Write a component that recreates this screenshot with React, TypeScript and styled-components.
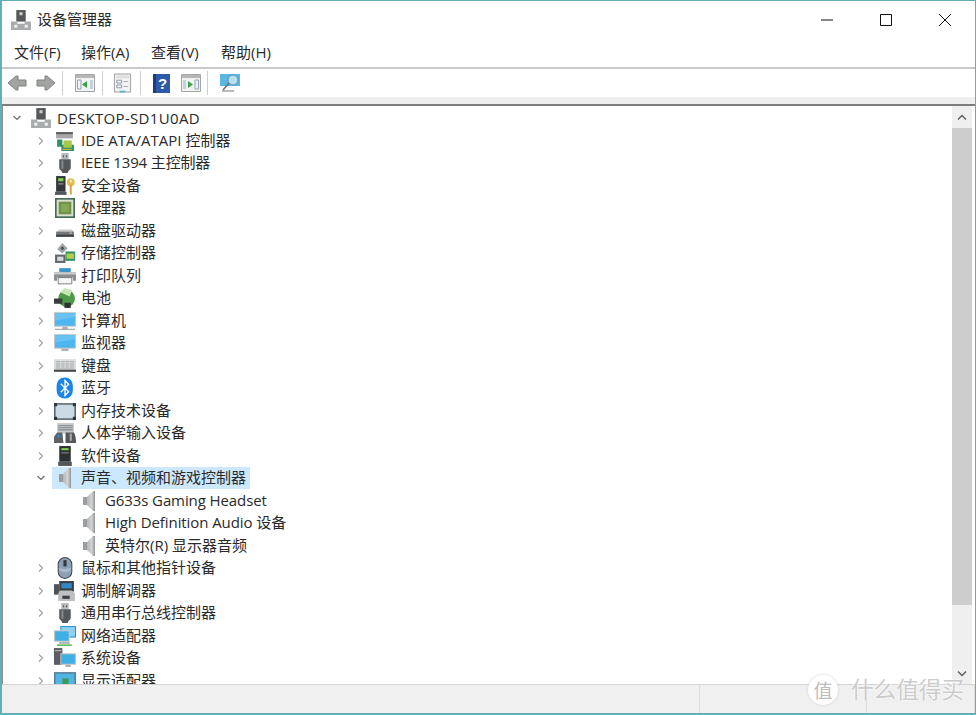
import React from 'react';
import styled, { createGlobalStyle } from 'styled-components';

const Global = createGlobalStyle`
  html, body { margin: 0; padding: 0; background: #fff; }
  body { font-family: "Open Sans", "Noto Sans CJK SC", sans-serif; color: #2a2a2a; }
`;

const Window = styled.div`
  position: relative;
  width: 976px;
  height: 715px;
  box-sizing: border-box;
  display: flex;
  flex-direction: column;
  overflow: hidden;
  background: #fff;
  border: 1px solid #63aeb8;
  border-width: 1px 1px 2px 2px;
`;

const TitleBar = styled.div`
  height: 37px;
  display: flex;
  align-items: center;
  padding: 0 1px 0 8px;
  flex: none;
`;

const Title = styled.span`
  font-size: 15px;
  margin-left: 5px;
  padding-bottom: 2px;
  flex: 1;
`;

const WinButton = styled.div`
  width: 59px;
  height: 37px;
  display: flex;
  align-items: center;
  justify-content: center;
`;

const MenuBar = styled.div`
  height: 27px;
  padding: 0 0 2px 12px;
  display: flex;
  align-items: center;
  font-size: 15px;
  flex: none;
  border-bottom: 2px solid #c9c9c9;
`;

const MenuItem = styled.span<{ $w: number }>`
  width: ${p => p.$w}px;
  white-space: nowrap;
`;

const ToolBar = styled.div`
  height: 28px;
  display: flex;
  align-items: center;
  flex: none;
`;

const ToolButton = styled.div<{ $ml: number }>`
  margin-left: ${p => p.$ml}px;
  height: 26px;
  display: flex;
  align-items: center;
`;

const ToolSep = styled.div<{ $ml: number }>`
  width: 1px;
  height: 24px;
  background: #cfcfcf;
  margin-left: ${p => p.$ml}px;
`;

const Shelf = styled.div`
  height: 7px;
  flex: none;
  background: #efefef;
  border-bottom: 2px solid #7d7d7d;
`;

const Body = styled.div`
  flex: 1;
  min-height: 0;
  display: flex;
  border-left: 1px solid #8a8f90;
`;

const Tree = styled.div`
  flex: 1;
  min-width: 0;
  overflow: hidden;
  padding: 0.75px 0 0 6px;
`;

const Row = styled.div<{ $level: number }>`
  height: 22.5px;
  display: flex;
  align-items: center;
  padding-left: ${p => p.$level * 24}px;
`;

const Chevron = styled.div`
  width: 16px;
  margin-right: 3px;
  display: flex;
  justify-content: center;
  flex: none;
`;

const Label = styled.div<{ $selected?: boolean }>`
  display: flex;
  align-items: center;
  height: 22px;
  padding-right: 4px;
  background: ${p => (p.$selected ? '#cce8ff' : 'transparent')};
`;

const IconSlot = styled.div`
  width: 26px;
  height: 22px;
  display: flex;
  align-items: center;
  justify-content: center;
  margin-right: 3px;
  flex: none;
`;

const RowText = styled.span<{ $track?: number; $root?: boolean }>`
  font-size: 15px;
  line-height: 20px;
  padding-bottom: ${p => (p.$root ? 0 : 2)}px;
  white-space: nowrap;
  letter-spacing: ${p => p.$track ?? 0}px;
`;

const Scrollbar = styled.div`
  width: 20px;
  margin-right: 3px;
  flex: none;
  display: flex;
  flex-direction: column;
  background: #efefef;
`;

const ScrollArrow = styled.div`
  height: 22px;
  flex: none;
  display: flex;
  align-items: center;
  justify-content: center;
`;

const ScrollThumb = styled.div`
  height: 477px;
  flex: none;
  background: #cdcdcd;
`;

const ScrollGap = styled.div`
  flex: 1;
`;

const StatusBar = styled.div`
  height: 28px;
  flex: none;
  display: flex;
  background: #f0f0f0;
  border-top: 1px solid #d4d4d4;
`;

const StatusCell = styled.div<{ $w?: number }>`
  ${p => (p.$w ? `width: ${p.$w}px; flex: none;` : 'flex: 1;')}
  border-right: 1px solid #dcdcdc;
`;

const Watermark = styled.div`
  position: absolute;
  right: 11px;
  bottom: 8px;
  display: flex;
  align-items: center;
  gap: 13px;
  color: #cbcbcb;
  text-shadow: 0 0 2px #fff, 0 0 2px #fff;
`;

const MarkBadge = styled.div`
  width: 30px;
  height: 30px;
  border-radius: 50%;
  background: #fff;
  box-shadow: 0 0 3px #cfcfcf;
  display: flex;
  align-items: center;
  justify-content: center;
  font-size: 19px;
  color: #bdbdbd;
`;

const MarkText = styled.span`
  font-size: 22.6px;
  line-height: 28px;
  white-space: nowrap;
`;

type IconName =
  | 'pc' | 'ide' | 'usb' | 'sec' | 'cpu' | 'disk' | 'storage' | 'printer' | 'battery'
  | 'computer' | 'monitor' | 'keyboard' | 'bluetooth' | 'memory' | 'hid' | 'software'
  | 'mouse' | 'modem' | 'network' | 'system' | 'display';

const Icon = ({ name }: { name: IconName }) => {
  const body = () => {
    switch (name) {
      case 'pc':
        return <>
          <path d="M6 1h9v11h-9z" fill="#55585a" />
          <path d="M9 3h3v3h-3z" fill="#c9cccd" />
          <path d="M1 12h6v2h7v-2h6v8h-19z" fill="#a9acae" />
          <path d="M4 15h3v3h-3zM14 15h3v3h-3z" fill="#eceded" />
        </>;
      case 'ide':
        return <>
          <path d="M2 2h16v6h-16z" fill="#a5a7a9" />
          <path d="M2 2h16v2h-16z" fill="#5d6063" />
          <path d="M3 9h5v5h11v6h-12v-4h-4z" fill="#2e8f62" />
          <path d="M9 10h8v7h-8z" fill="#a8c84a" />
          <path d="M8 18h9v1h-9z" fill="#d7b64a" />
        </>;
      case 'usb':
        return <>
          <path d="M7 1h7v6h-7z" fill="#b7babc" />
          <path d="M8.5 3h1v2h-1zM11.5 3h1v2h-1z" fill="#55585a" />
          <path d="M5 7h11v8q0 2-2 3l-1 2h-5l-1-2q-2-1-2-3z" fill="#55585a" />
          <path d="M7 8h2v8h-2z" fill="#85888a" />
        </>;
      case 'sec':
        return <>
          <path d="M2 1h9v15h-9z" fill="#33363a" />
          <path d="M4 3h5v3h-5z" fill="#7fd04a" />
          <path d="M4 8h5v1h-5z" fill="#a6a8aa" />
          <path d="M1 16h11v3h-11z" fill="#55585a" />
          <circle cx="16" cy="7" r="3.8" fill="#e9bd52" />
          <path d="M15 9h2v10l-2-1z" fill="#d9a93c" />
          <circle cx="16" cy="6" r="1" fill="#fff" />
        </>;
      case 'cpu':
        return <>
          <path d="M1 1h19v19h-19z" fill="#3a6550" />
          <path d="M2.5 2.5h16v16h-16z" fill="#d9decf" />
          <path d="M4.5 4.5h12v12h-12z" fill="#6f9146" />
          <path d="M6.5 6.5h8v8h-8z" fill="#86a653" />
        </>;
      case 'disk':
        return <>
          <path d="M3 11l2-2h12l2 2z" fill="#c9cbcd" />
          <path d="M2 11h17v5h-17z" fill="#75787a" />
          <path d="M2 14h17v2h-17z" fill="#3f4245" />
          <path d="M15 12h2v1h-2z" fill="#d5d7d8" />
        </>;
      case 'storage':
        return <>
          <path d="M3 7l5-6 5 5-5 5z" fill="#a5a8aa" />
          <path d="M6 6l2-2 2 2-2 2z" fill="#505356" />
          <path d="M1 12h10v8h-10z" fill="#63676a" />
          <path d="M3 14h6v4h-6z" fill="#d7d9da" />
          <path d="M11 9h9v9h-9z" fill="#2f9166" />
          <path d="M12 11h7v5h-7z" fill="#b4cf4d" />
        </>;
      case 'printer':
        return <>
          <path d="M5 3h11v4h-11z" fill="#3d94c9" />
          <path d="M0 7h21v8h-3v-3h-15v3h-3z" fill="#8d9092" />
          <path d="M0 7h21v2h-21z" fill="#cfd1d2" />
          <path d="M4 12h13v6h-13z" fill="#f6f6f6" stroke="#55585a" strokeWidth=".7" />
        </>;
      case 'battery':
        return <>
          <circle cx="12" cy="11" r="8" fill="#4d9b49" />
          <path d="M6 5l4-4 7 2-2 6z" fill="#c8e6b3" />
          <path d="M0 11h8v5h-8z" fill="#3a3d40" />
          <path d="M10 15h6v5h-6z" fill="#2e3134" />
        </>;
      case 'computer':
      case 'monitor':
        return <>
          <path d="M0 2h21v14h-21z" fill="#c4c6c8" />
          <path d="M1 3h19v12h-19z" fill="#4db6ee" />
          <path d="M1 3h19v4l-19 3z" fill="#68c3f2" />
          {name === 'computer'
            ? <path d="M8 16h5v2h-5zM1 18h19v1h-19z" fill="#a9acae" />
            : <path d="M7 16h7v2h-7z" fill="#a9acae" />}
        </>;
      case 'keyboard':
        return <>
          <path d="M0 4h21v12h-21z" fill="#dadcdd" />
          <path d="M0 14h21v2h-21z" fill="#43464a" />
          <path d="M2 6h17v1h-17zM2 8h17v1h-17zM2 10h17v1h-17zM2 12h17v1h-17z" fill="#a4a7a9" />
          <path d="M6 5.5h1v7h-1zM10 5.5h1v7h-1zM14 5.5h1v7h-1z" fill="#dadcdd" />
        </>;
      case 'bluetooth':
        return <>
          <rect x="2.5" y="0.5" width="15.5" height="20" rx="7.5" fill="#1a87e8" />
          <path d="M6.5 6.5l7.5 7.5-3.5 3.5v-14l3.5 3.5-7.5 7.5" fill="none" stroke="#fff" strokeWidth="1.3" />
        </>;
      case 'memory':
        return <>
          <path d="M0 3h21v16h-21z" fill="#5a6670" />
          <path d="M1.5 4.5h18v13h-18z" fill="#cbdae5" />
          <path d="M0 3h3v3h-3zM18 3h3v3h-3zM0 16h3v3h-3zM18 16h3v3h-3z" fill="#2e3438" />
        </>;
      case 'hid':
        return <>
          <path d="M3 1h16v10h-16z" fill="#c6c8ca" />
          <path d="M4 3h14v1h-14zM4 5h14v1h-14zM4 7h14v1h-14z" fill="#85888a" />
          <path d="M0 14l3-4h5l1 10h-9z" fill="#5e6265" />
          <path d="M3 12h3v3h-3z" fill="#2f80c4" />
          <path d="M11 10h8q2 3 2 10h-10z" fill="#54585b" />
          <path d="M15 11h2v7h-2z" fill="#a8abad" />
        </>;
      case 'software':
        return <>
          <path d="M5 1h11v15h-11z" fill="#2e3134" />
          <path d="M7 3h7v2h-7z" fill="#7fd04a" />
          <path d="M7 7h7v1h-7z" fill="#8a8d8f" />
          <path d="M4 16h13v4h-13z" fill="#55585a" />
        </>;
      case 'mouse':
        return <>
          <rect x="4" y="0.5" width="13" height="20" rx="6.5" fill="#8ba0b6" stroke="#43474c" />
          <path d="M9 3h3v6h-3z" fill="#33373b" />
          <path d="M5 10q5 3 11 0v3q-5 3-11 0z" fill="#a9bacb" />
        </>;
      case 'modem':
        return <>
          <path d="M0 4h5v10h-5z" fill="#4f5356" />
          <path d="M5 1h14v10h-14z" fill="#3a3e42" />
          <path d="M7 3h10v5h-10z" fill="#3388c6" />
          <path d="M4 13l2-3h11l3 3v7h-16z" fill="#bdbfc1" />
          <path d="M8 15h7v3h-7z" fill="#3b3e42" />
        </>;
      case 'network':
        return <>
          <path d="M6 1h15v11h-15z" fill="#2f8fc4" />
          <path d="M7 2h13v9h-13z" fill="#8ed2f2" />
          <path d="M0 5h15v11h-15z" fill="#c4c6c8" />
          <path d="M1 6h13v9h-13z" fill="#3fb0e6" />
          <path d="M5 16h10v2h-10z" fill="#b1b3b5" />
          <path d="M3 18.5h14v1.5h-14z" fill="#50bb50" />
        </>;
      case 'system':
        return <>
          <path d="M0 1h8v16h-8z" fill="#5b5f62" />
          <path d="M1 3h6v1h-6z" fill="#b9bbbd" />
          <path d="M6 6h15v11h-15z" fill="#bfc1c3" />
          <path d="M7 7h13v9h-13z" fill="#3fb0e6" />
          <path d="M11 17h5v2h-5z" fill="#a9acae" />
        </>;
      case 'display':
        return <>
          <path d="M0 2h21v16h-21z" fill="#5a7f96" />
          <path d="M1.5 3.5h18v13h-18z" fill="#4fb5e4" />
          <path d="M8 8h6v6h-6z" fill="#3b9a5c" />
        </>;
    }
  };
  return <svg width="22" height="22" viewBox="0 0 21 21">{body()}</svg>;
};

const Speaker = () => (
  <svg width="14" height="22" viewBox="0 0 14 22">
    <defs>
      <linearGradient id="cone" x1="0" x2="1" y1="0" y2="0">
        <stop offset="0" stopColor="#b4b6b8" />
        <stop offset="0.6" stopColor="#d2d4d5" />
        <stop offset="1" stopColor="#8f9294" />
      </linearGradient>
    </defs>
    <path d="M1 7h4v8h-4z" fill="#9a9d9f" />
    <path d="M5 7l6-6h2v20h-2l-6-6z" fill="url(#cone)" />
  </svg>
);

const ChevronRight = () => (
  <svg width="8" height="10" viewBox="0 0 8 10"><path d="M2 1.5l3.5 3.5-3.5 3.5" fill="none" stroke="#a2a2a2" strokeWidth="1.2" /></svg>
);

const ChevronDown = () => (
  <svg width="10" height="8" viewBox="0 0 10 8"><path d="M1.5 2l3.5 3.5 3.5-3.5" fill="none" stroke="#6d6d6d" strokeWidth="1.2" /></svg>
);

const BackArrow = ({ flip }: { flip?: boolean }) => (
  <svg width="20" height="18" viewBox="0 0 20 18" style={flip ? { transform: 'scaleX(-1)' } : undefined}>
    <path d="M1 9l8-7h2v4h8v6h-8v4h-2z" fill="#a2a4a2" stroke="#7f817f" strokeLinejoin="round" />
  </svg>
);

const PaneIcon = ({ right }: { right?: boolean }) => (
  <svg width="20" height="18" viewBox="0 0 20 18">
    <path d="M0.5 0.5h19v17h-19z" fill="#f2f2f2" stroke="#a5a5a5" />
    <path d="M1 1h18v3h-18z" fill="#b5b7b9" />
    {right
      ? <path d="M7 7l5 3.5-5 3.5z" fill="#3ca34a" />
      : <path d="M12 7l-5 3.5 5 3.5z" fill="#3ca34a" />}
    <path d={right ? 'M14 6h3.5v9h-3.5z' : 'M2.5 6h3.5v9h-3.5z'} fill="none" stroke="#8aa4bd" />
    <path d={right ? 'M2 6h3v9h-3z' : 'M15 6h3v9h-3z'} fill="#c4d2df" />
  </svg>
);

const DocIcon = () => (
  <svg width="19" height="21" viewBox="0 0 20 21">
    <path d="M1.5 0.5h17v19h-17z" fill="#f3f3f3" stroke="#9c9c9c" />
    <path d="M3 2h14v3h-14z" fill="#dedede" />
    <path d="M4 7h5v3h-5zM4 12h5v3h-5z" fill="none" stroke="#8d99a5" />
    <path d="M11 8h5v1h-5zM11 13h5v1h-5z" fill="#8d99a5" />
    <path d="M7 18h6v2h-6z" fill="#65b4d8" />
  </svg>
);

const HelpIcon = () => (
  <svg width="17" height="21" viewBox="0 0 17 21">
    <path d="M0 1h17v19h-17z" fill="#2c5aa8" />
    <path d="M0 1h3v19h-3z" fill="#1c3c7c" />
    <text x="9.5" y="16" fontSize="15" fontWeight="700" fill="#fff" textAnchor="middle" fontFamily="Liberation Sans">?</text>
  </svg>
);

const SearchIcon = () => (
  <svg width="22" height="20" viewBox="0 0 22 20">
    <path d="M1 1h20v12h-20z" fill="#58b7e3" />
    <circle cx="14" cy="7" r="5" fill="#b7dff2" stroke="#5e93ae" />
    <path d="M10 10l-6 7" stroke="#6d7073" strokeWidth="1.6" />
    <path d="M3 18h12" stroke="#9a9c9e" strokeWidth="1.4" />
  </svg>
);

const rows: { level: number; icon: IconName | 'speaker'; text: string; open?: boolean; leaf?: boolean; selected?: boolean; track?: number }[] = [
  { level: 0, icon: 'pc', text: 'DESKTOP-SD1U0AD', open: true, track: 0.33 },
  { level: 1, icon: 'ide', text: 'IDE ATA/ATAPI 控制器' },
  { level: 1, icon: 'usb', text: 'IEEE 1394 主控制器', track: -0.15 },
  { level: 1, icon: 'sec', text: '安全设备' },
  { level: 1, icon: 'cpu', text: '处理器' },
  { level: 1, icon: 'disk', text: '磁盘驱动器' },
  { level: 1, icon: 'storage', text: '存储控制器' },
  { level: 1, icon: 'printer', text: '打印队列' },
  { level: 1, icon: 'battery', text: '电池' },
  { level: 1, icon: 'computer', text: '计算机' },
  { level: 1, icon: 'monitor', text: '监视器' },
  { level: 1, icon: 'keyboard', text: '键盘' },
  { level: 1, icon: 'bluetooth', text: '蓝牙' },
  { level: 1, icon: 'memory', text: '内存技术设备' },
  { level: 1, icon: 'hid', text: '人体学输入设备' },
  { level: 1, icon: 'software', text: '软件设备' },
  { level: 1, icon: 'speaker', text: '声音、视频和游戏控制器', open: true, selected: true },
  { level: 2, icon: 'speaker', text: 'G633s Gaming Headset', leaf: true, track: -0.1 },
  { level: 2, icon: 'speaker', text: 'High Definition Audio 设备', leaf: true, track: -0.08 },
  { level: 2, icon: 'speaker', text: '英特尔(R) 显示器音频', leaf: true },
  { level: 1, icon: 'mouse', text: '鼠标和其他指针设备' },
  { level: 1, icon: 'modem', text: '调制解调器' },
  { level: 1, icon: 'usb', text: '通用串行总线控制器' },
  { level: 1, icon: 'network', text: '网络适配器' },
  { level: 1, icon: 'system', text: '系统设备' },
  { level: 1, icon: 'display', text: '显示适配器' },
];

const App = () => (
  <>
    <Global />
    <Window>
      <TitleBar>
        <Icon name="pc" />
        <Title>设备管理器</Title>
        <WinButton>
          <svg width="12" height="2" viewBox="0 0 12 2"><path d="M0 1h12" stroke="#111" /></svg>
        </WinButton>
        <WinButton>
          <svg width="12" height="12" viewBox="0 0 12 12"><path d="M.5.5h11v11h-11z" fill="none" stroke="#111" /></svg>
        </WinButton>
        <WinButton>
          <svg width="12" height="12" viewBox="0 0 12 12"><path d="M0 0l12 12M12 0l-12 12" stroke="#111" /></svg>
        </WinButton>
      </TitleBar>
      <MenuBar>
        <MenuItem $w={67}>文件(F)</MenuItem>
        <MenuItem $w={70}>操作(A)</MenuItem>
        <MenuItem $w={70}>查看(V)</MenuItem>
        <MenuItem $w={60}>帮助(H)</MenuItem>
      </MenuBar>
      <ToolBar>
        <ToolButton $ml={5}><BackArrow /></ToolButton>
        <ToolButton $ml={9}><BackArrow flip /></ToolButton>
        <ToolSep $ml={6} />
        <ToolButton $ml={12}><PaneIcon /></ToolButton>
        <ToolSep $ml={7} />
        <ToolButton $ml={10}><DocIcon /></ToolButton>
        <ToolSep $ml={8} />
        <ToolButton $ml={12}><HelpIcon /></ToolButton>
        <ToolButton $ml={11}><PaneIcon right /></ToolButton>
        <ToolSep $ml={6} />
        <ToolButton $ml={11}><SearchIcon /></ToolButton>
      </ToolBar>
      <Shelf />
      <Body>
        <Tree>
          {rows.map(r => (
            <Row key={r.text + r.level} $level={r.level}>
              <Chevron>{r.leaf ? null : r.open ? <ChevronDown /> : <ChevronRight />}</Chevron>
              <Label $selected={r.selected}>
                <IconSlot>{r.icon === 'speaker' ? <Speaker /> : <Icon name={r.icon} />}</IconSlot>
                <RowText $track={r.track} $root={r.level === 0}>{r.text}</RowText>
              </Label>
            </Row>
          ))}
        </Tree>
        <Scrollbar>
          <ScrollArrow>
            <svg width="10" height="7" viewBox="0 0 10 7"><path d="M1 5.5l4-4 4 4" fill="none" stroke="#606060" strokeWidth="1.5" /></svg>
          </ScrollArrow>
          <ScrollThumb />
          <ScrollGap />
          <ScrollArrow>
            <svg width="10" height="7" viewBox="0 0 10 7"><path d="M1 1.5l4 4 4-4" fill="none" stroke="#606060" strokeWidth="1.5" /></svg>
          </ScrollArrow>
        </Scrollbar>
      </Body>
      <StatusBar>
        <StatusCell $w={697} />
        <StatusCell $w={166} />
        <StatusCell />
      </StatusBar>
      <Watermark>
        <MarkBadge>值</MarkBadge>
        <MarkText>什么值得买</MarkText>
      </Watermark>
    </Window>
  </>
);

export default App;
